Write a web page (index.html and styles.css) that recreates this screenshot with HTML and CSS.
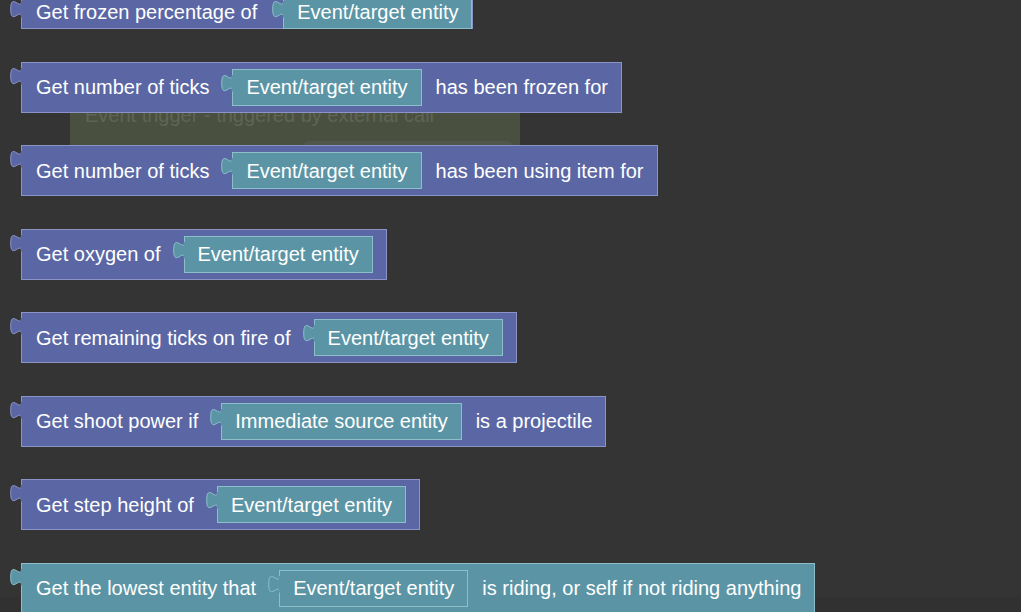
FILE: index.html
```html
<!DOCTYPE html>
<html>
<head>
<meta charset="utf-8">
<link rel="stylesheet" href="styles.css">
</head>
<body>
<div class="canvas">
  <div class="ws-block">
    <span class="ws-title">Event trigger - triggered by external call</span>
    <span class="ws-field"></span>
  </div>

  <div class="flyout">
    <div class="block purple short">
      <svg class="tab" width="12" height="19" viewBox="0 0 12 19"><path d="M11.5 0.5 C11.5 12 0.7 -8.7 0.7 9.1 S11.5 6.25 11.5 17.75"/><rect x="11" y="1" width="1.5" height="16.5"/></svg>
      <span class="label">Get frozen percentage of</span>
      <div class="input teal fill">
        <svg class="tab" width="12" height="19" viewBox="0 0 12 19"><path d="M11.5 0.5 C11.5 12 0.7 -8.7 0.7 9.1 S11.5 6.25 11.5 17.75"/><rect x="11" y="1" width="1.5" height="16.5"/></svg>
        <span class="label">Event/target entity</span>
      </div>
    </div>

    <div class="block purple">
      <svg class="tab" width="12" height="19" viewBox="0 0 12 19"><path d="M11.5 0.5 C11.5 12 0.7 -8.7 0.7 9.1 S11.5 6.25 11.5 17.75"/><rect x="11" y="1" width="1.5" height="16.5"/></svg>
      <span class="label">Get number of ticks</span>
      <div class="input teal">
        <svg class="tab" width="12" height="19" viewBox="0 0 12 19"><path d="M11.5 0.5 C11.5 12 0.7 -8.7 0.7 9.1 S11.5 6.25 11.5 17.75"/><rect x="11" y="1" width="1.5" height="16.5"/></svg>
        <span class="label">Event/target entity</span>
      </div>
      <span class="label">has been frozen for</span>
    </div>

    <div class="block purple">
      <svg class="tab" width="12" height="19" viewBox="0 0 12 19"><path d="M11.5 0.5 C11.5 12 0.7 -8.7 0.7 9.1 S11.5 6.25 11.5 17.75"/><rect x="11" y="1" width="1.5" height="16.5"/></svg>
      <span class="label">Get number of ticks</span>
      <div class="input teal">
        <svg class="tab" width="12" height="19" viewBox="0 0 12 19"><path d="M11.5 0.5 C11.5 12 0.7 -8.7 0.7 9.1 S11.5 6.25 11.5 17.75"/><rect x="11" y="1" width="1.5" height="16.5"/></svg>
        <span class="label">Event/target entity</span>
      </div>
      <span class="label">has been using item for</span>
    </div>

    <div class="block purple">
      <svg class="tab" width="12" height="19" viewBox="0 0 12 19"><path d="M11.5 0.5 C11.5 12 0.7 -8.7 0.7 9.1 S11.5 6.25 11.5 17.75"/><rect x="11" y="1" width="1.5" height="16.5"/></svg>
      <span class="label">Get oxygen of</span>
      <div class="input teal">
        <svg class="tab" width="12" height="19" viewBox="0 0 12 19"><path d="M11.5 0.5 C11.5 12 0.7 -8.7 0.7 9.1 S11.5 6.25 11.5 17.75"/><rect x="11" y="1" width="1.5" height="16.5"/></svg>
        <span class="label">Event/target entity</span>
      </div>
    </div>

    <div class="block purple">
      <svg class="tab" width="12" height="19" viewBox="0 0 12 19"><path d="M11.5 0.5 C11.5 12 0.7 -8.7 0.7 9.1 S11.5 6.25 11.5 17.75"/><rect x="11" y="1" width="1.5" height="16.5"/></svg>
      <span class="label">Get remaining ticks on fire of</span>
      <div class="input teal">
        <svg class="tab" width="12" height="19" viewBox="0 0 12 19"><path d="M11.5 0.5 C11.5 12 0.7 -8.7 0.7 9.1 S11.5 6.25 11.5 17.75"/><rect x="11" y="1" width="1.5" height="16.5"/></svg>
        <span class="label">Event/target entity</span>
      </div>
    </div>

    <div class="block purple">
      <svg class="tab" width="12" height="19" viewBox="0 0 12 19"><path d="M11.5 0.5 C11.5 12 0.7 -8.7 0.7 9.1 S11.5 6.25 11.5 17.75"/><rect x="11" y="1" width="1.5" height="16.5"/></svg>
      <span class="label">Get shoot power if</span>
      <div class="input teal">
        <svg class="tab" width="12" height="19" viewBox="0 0 12 19"><path d="M11.5 0.5 C11.5 12 0.7 -8.7 0.7 9.1 S11.5 6.25 11.5 17.75"/><rect x="11" y="1" width="1.5" height="16.5"/></svg>
        <span class="label">Immediate source entity</span>
      </div>
      <span class="label">is a projectile</span>
    </div>

    <div class="block purple">
      <svg class="tab" width="12" height="19" viewBox="0 0 12 19"><path d="M11.5 0.5 C11.5 12 0.7 -8.7 0.7 9.1 S11.5 6.25 11.5 17.75"/><rect x="11" y="1" width="1.5" height="16.5"/></svg>
      <span class="label">Get step height of</span>
      <div class="input teal">
        <svg class="tab" width="12" height="19" viewBox="0 0 12 19"><path d="M11.5 0.5 C11.5 12 0.7 -8.7 0.7 9.1 S11.5 6.25 11.5 17.75"/><rect x="11" y="1" width="1.5" height="16.5"/></svg>
        <span class="label">Event/target entity</span>
      </div>
    </div>

    <div class="block teal">
      <svg class="tab" width="12" height="19" viewBox="0 0 12 19"><path d="M11.5 0.5 C11.5 12 0.7 -8.7 0.7 9.1 S11.5 6.25 11.5 17.75"/><rect x="11" y="1" width="1.5" height="16.5"/></svg>
      <span class="label">Get the lowest entity that</span>
      <div class="input teal">
        <svg class="tab" width="12" height="19" viewBox="0 0 12 19"><path d="M11.5 0.5 C11.5 12 0.7 -8.7 0.7 9.1 S11.5 6.25 11.5 17.75"/><rect x="11" y="1" width="1.5" height="16.5"/></svg>
        <span class="label">Event/target entity</span>
      </div>
      <span class="label">is riding, or self if not riding anything</span>
    </div>
  </div>
</div>
</body>
</html>
```

FILE: styles.css
```css
html, body {
  margin: 0;
  padding: 0;
}

body {
  width: 1021px;
  height: 612px;
  overflow: hidden;
  background: linear-gradient(to bottom, #343434 0, #343434 597px, #313131 597px);
  font-family: "Liberation Sans", Arial, sans-serif;
  font-size: 20px;
  color: #ffffff;
}

.canvas {
  position: relative;
  display: flow-root;
  width: 1021px;
  height: 612px;
}

/* workspace block visible behind the flyout */
.ws-block {
  position: absolute;
  left: 70px;
  top: 88px;
  width: 450px;
  height: 100px;
  background: #4a5040;
  border-radius: 2px;
}

.ws-title {
  position: absolute;
  left: 15px;
  top: 15px;
  color: #5e6553;
  font-size: 20px;
  line-height: 24px;
  white-space: nowrap;
}

.ws-field {
  position: absolute;
  left: 233px;
  top: 53px;
  width: 210px;
  height: 22px;
  border-radius: 6px;
  background: #50564a;
}

/* flyout of blocks */
.flyout {
  position: relative;
  display: flex;
  flex-direction: column;
  align-items: flex-start;
  gap: 32.5px;
  padding-left: 21px;
  margin-top: -5px;
}

.purple {
  --fill: #5b67a5;
  --line: #8c94c7;
}

.teal {
  --fill: #5b95a5;
  --line: #8cbfca;
}

.block {
  position: relative;
  display: flex;
  align-items: center;
  box-sizing: border-box;
  height: 51px;
  padding: 0 13px 0 14px;
  background: var(--fill);
  border: 1px solid var(--line);
  white-space: nowrap;
}

.block.short {
  height: 34px;
  padding-right: 0;
}

.label {
  display: block;
  line-height: 24px;
  white-space: nowrap;
}

.input {
  position: relative;
  display: flex;
  align-items: center;
  box-sizing: border-box;
  height: 37px;
  margin: 0 14px 0 23px;
  padding: 0 13px;
  background: var(--fill);
  border: 1px solid var(--line);
}

.block > .input:last-child {
  margin-right: 0;
}

.input.fill {
  align-self: stretch;
  height: auto;
  margin: -1px -1px -1px 26px;
}

.tab {
  position: absolute;
  left: -12px;
  top: 4px;
  overflow: visible;
}

.tab path {
  fill: var(--fill);
  stroke: var(--line);
  stroke-width: 1;
}

.tab rect {
  fill: var(--fill);
}
```
